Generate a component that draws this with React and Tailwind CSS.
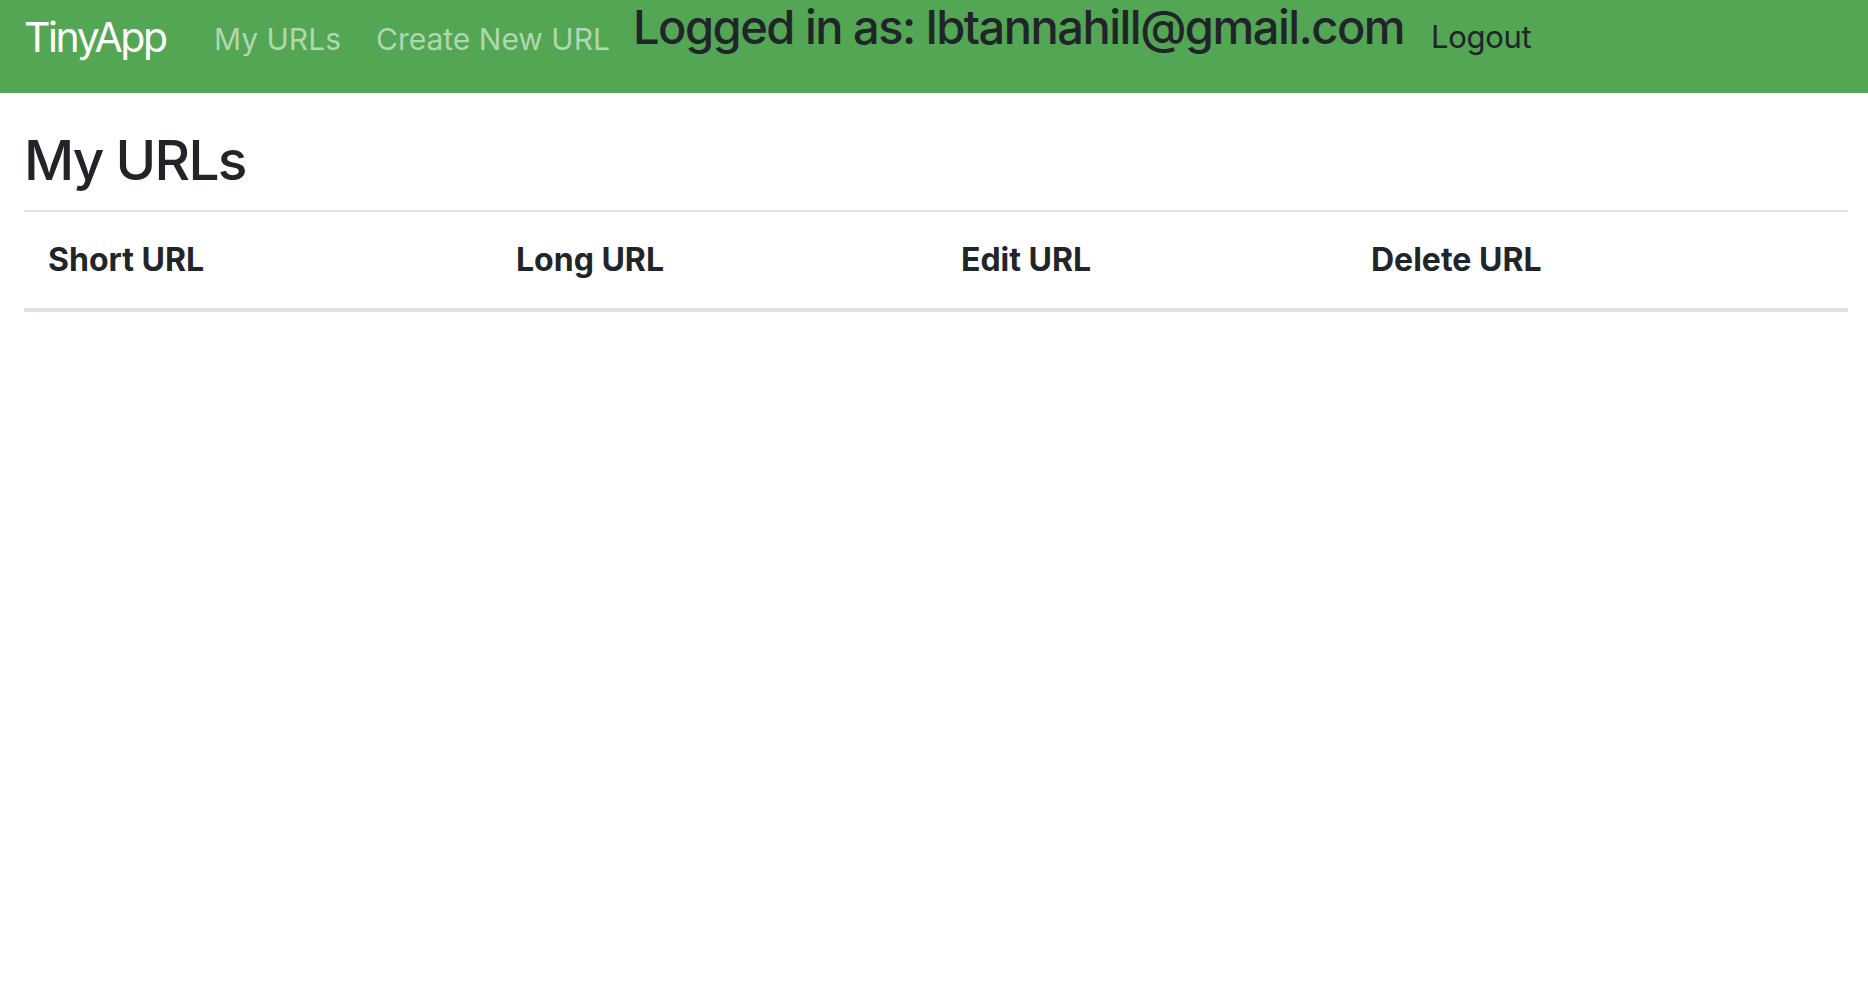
export default function App() {
  return (
    <div className="min-h-screen w-full bg-white text-[#212529]" style={{ fontFamily: "Inter, 'Liberation Sans', sans-serif" }}>
      <nav className="flex h-[93px] items-start bg-[#53a653] pl-[24px]">
        <a className="mt-[17px] w-[190px] shrink-0 text-[41px] leading-none tracking-[-2.45px] text-white">TinyApp</a>
        <a className="mt-[24px] w-[162px] shrink-0 text-[30px] leading-none text-[#b1d7b1]">My URLs</a>
        <a className="mt-[24px] w-[257px] shrink-0 text-[30px] leading-none text-[#b1d7b1]">Create New URL</a>
        <h4 className="mt-[3px] w-[798px] shrink-0 whitespace-nowrap text-[47px] font-medium leading-none tracking-[-1.5px] text-[#212529]">
          Logged in as: lbtannahill@gmail.com
        </h4>
        <a className="mt-[21px] shrink-0 text-[31px] leading-none tracking-[-0.3px] text-[#212529]">Logout</a>
      </nav>
      <main className="pl-[24px] pr-[20px]">
        <h3 className="mt-[40px] text-[55px] font-medium leading-none tracking-[-1.75px]">My URLs</h3>
        <div className="mt-[22px] h-[2px] bg-[#dee2e6]" />
        <div className="grid grid-cols-[468px_445px_410px_1fr] border-b-4 border-[#dee2e6] pb-[32px] pt-[32px] text-[32px] font-bold leading-none">
          <div className="pl-[24px]">Short URL</div>
          <div className="pl-[24px]">Long URL</div>
          <div className="pl-[24px]">Edit URL</div>
          <div className="pl-[24px]">Delete URL</div>
        </div>
      </main>
    </div>
  );
}
